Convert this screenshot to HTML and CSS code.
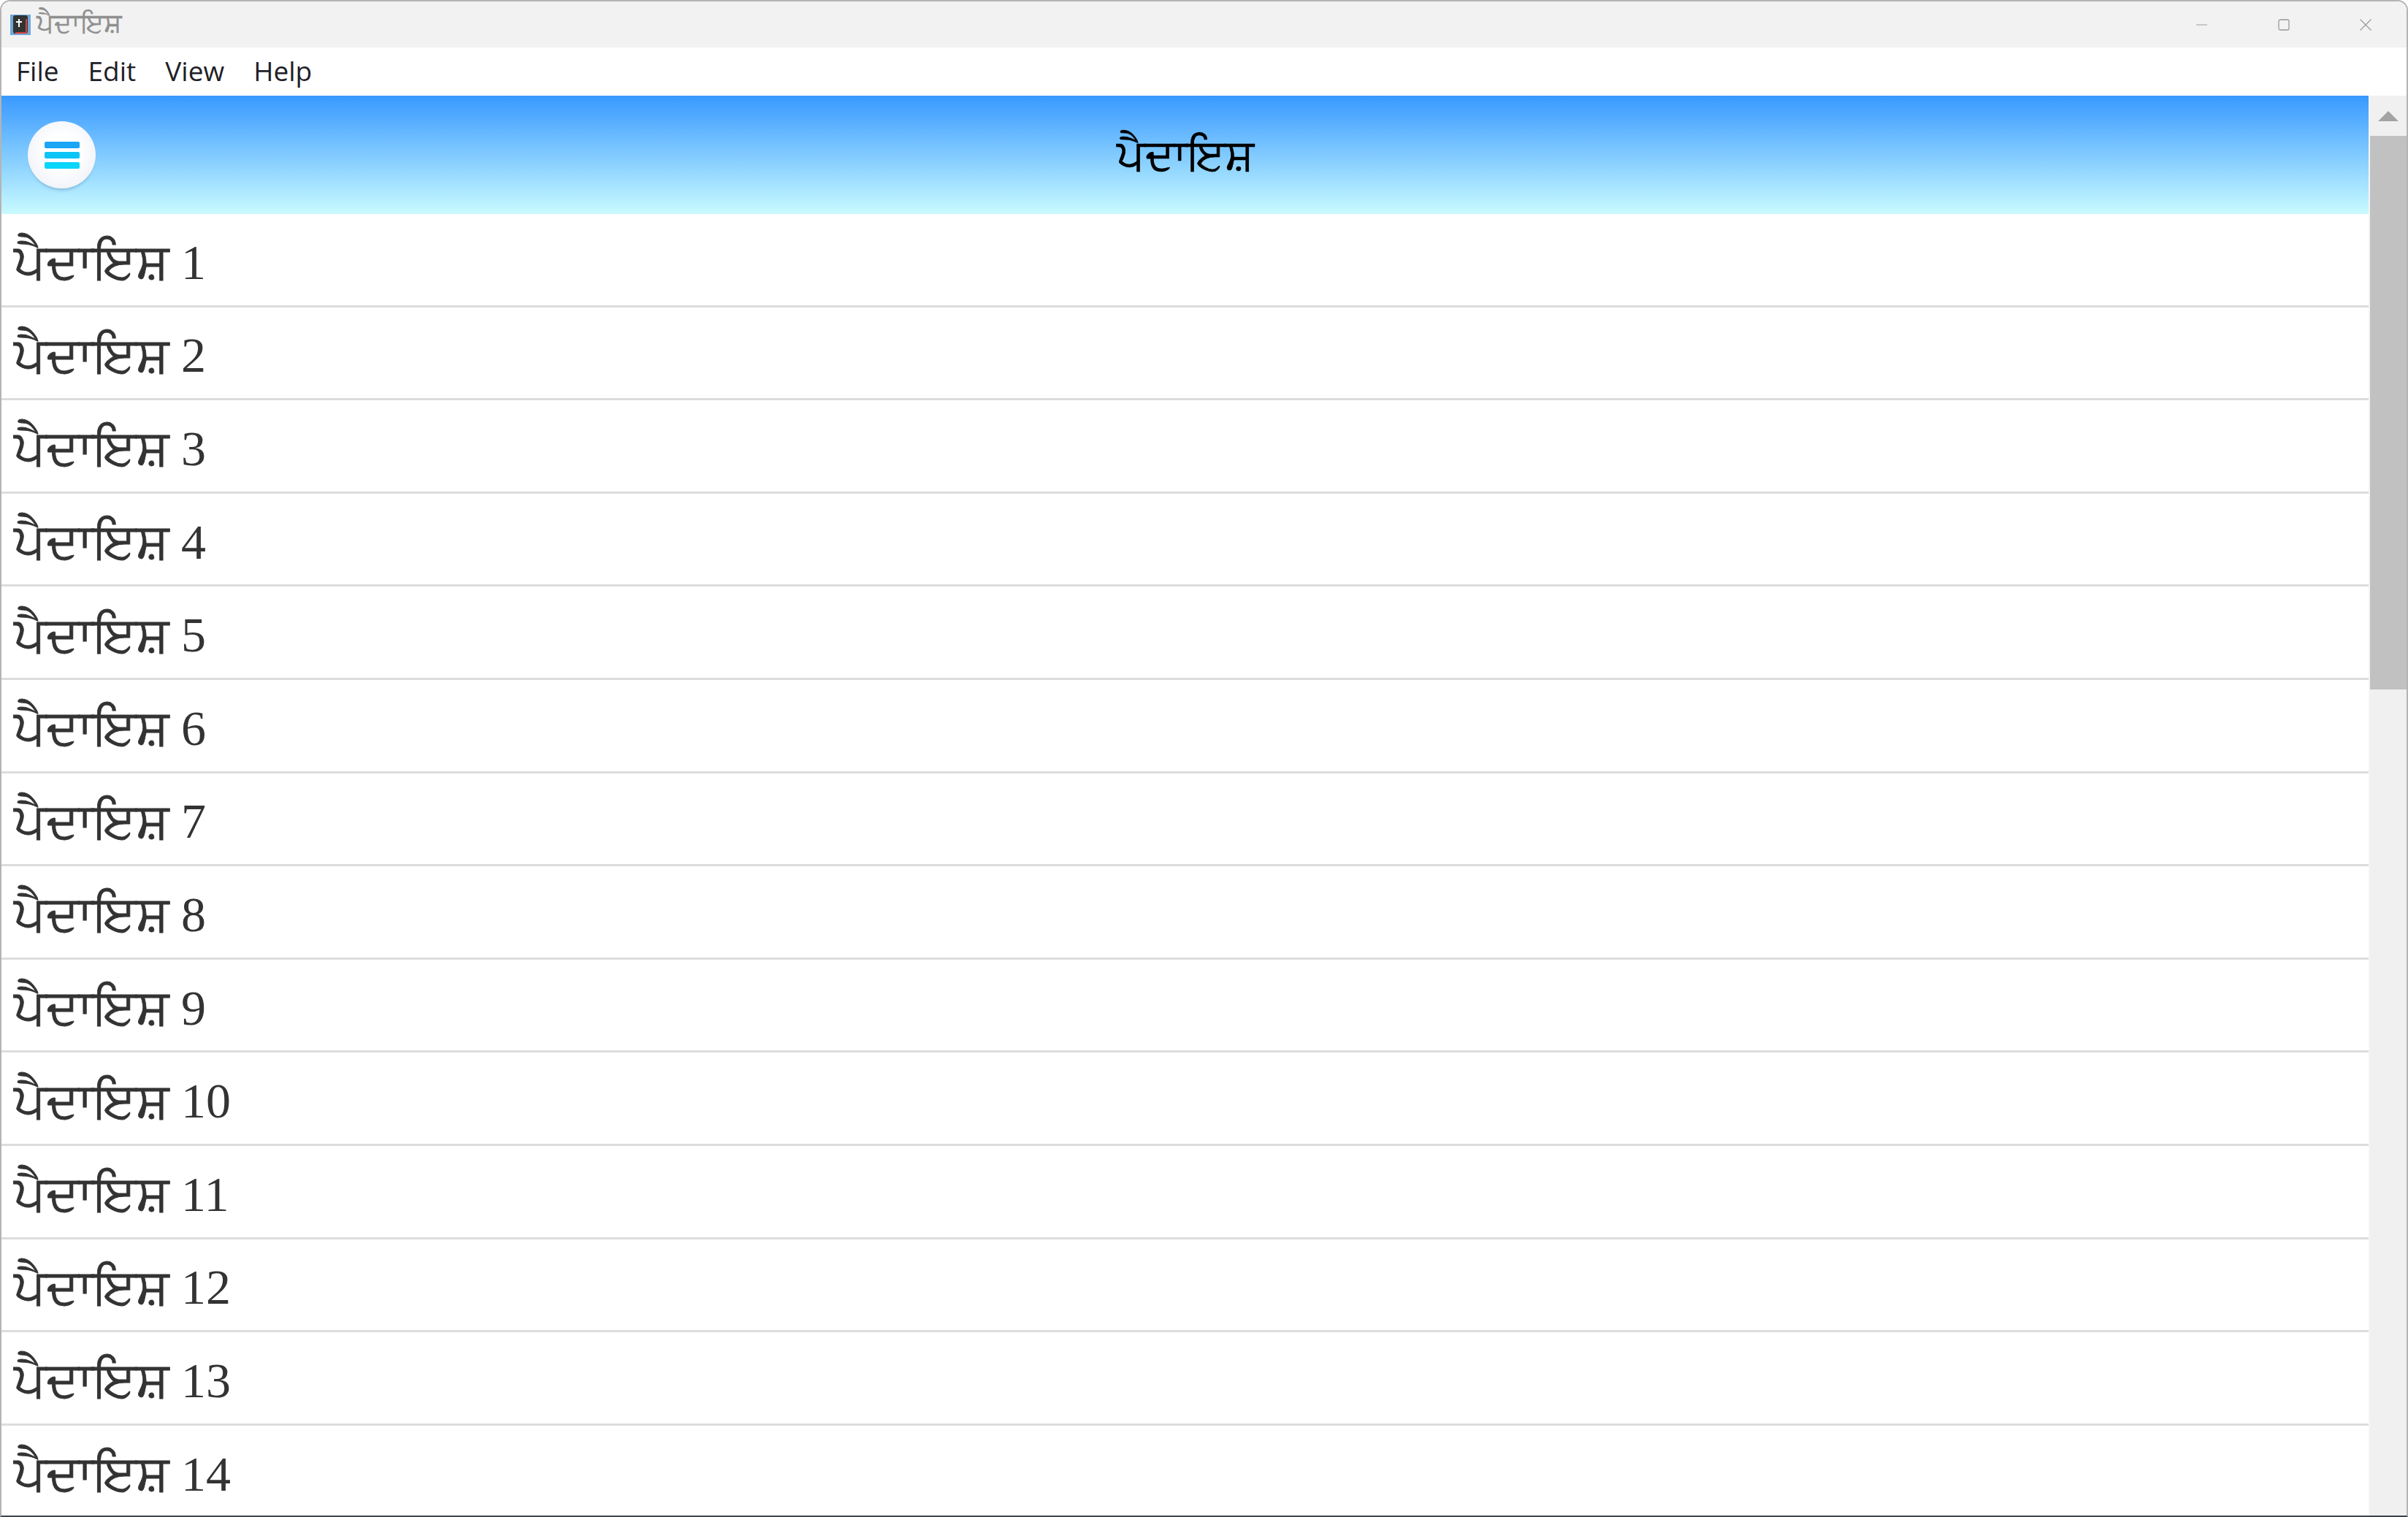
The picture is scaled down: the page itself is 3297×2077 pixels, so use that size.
FILE: index.html
```html
<!DOCTYPE html>
<html lang="pa">
<head>
<meta charset="utf-8">
<title>ਪੈਦਾਇਸ਼</title>
<link rel="stylesheet" href="styles.css">
</head>
<body>
<div class="window">
  <div class="titlebar">
    <svg class="app-icon" width="28" height="28" viewBox="0 0 28 28">
      <rect width="28" height="28" fill="#6fa8dc"/>
      <rect x="4" y="1" width="20" height="25" rx="3" fill="#333"/>
      <path d="M22 6v19H7" fill="none" stroke="#d9403a" stroke-width="2"/>
      <path d="M12 6v11M8 10h8" stroke="#fff" stroke-width="2"/>
    </svg>
    <span class="title-text">ਪੈਦਾਇਸ਼</span>
    <div class="controls">
      <svg width="16" height="16" viewBox="0 0 16 16"><path d="M0 8h15" stroke="#999" stroke-width="1.200"/></svg>
      <svg width="16" height="16" viewBox="0 0 16 16"><rect x="1" y="1" width="14" height="14" rx="2" fill="none" stroke="#999" stroke-width="1.300"/></svg>
      <svg width="16" height="16" viewBox="0 0 16 16"><path d="M0.500 0.500l15 15M15.500 0.500l-15 15" stroke="#999" stroke-width="1.200"/></svg>
    </div>
  </div>
  <nav class="menubar">
    <span>File</span><span>Edit</span><span>View</span><span>Help</span>
  </nav>
  <div class="content">
    <main class="page">
      <header class="header">
        <button class="menu-btn" aria-label="Menu"><span class="bars"><i></i><i></i><i></i></span></button>
        <h1>ਪੈਦਾਇਸ਼</h1>
      </header>
      <ul class="list">
        <li><span class="name">ਪੈਦਾਇਸ਼</span> 1</li><li><span class="name">ਪੈਦਾਇਸ਼</span> 2</li>
        <li><span class="name">ਪੈਦਾਇਸ਼</span> 3</li><li><span class="name">ਪੈਦਾਇਸ਼</span> 4</li>
        <li><span class="name">ਪੈਦਾਇਸ਼</span> 5</li><li><span class="name">ਪੈਦਾਇਸ਼</span> 6</li>
        <li><span class="name">ਪੈਦਾਇਸ਼</span> 7</li><li><span class="name">ਪੈਦਾਇਸ਼</span> 8</li>
        <li><span class="name">ਪੈਦਾਇਸ਼</span> 9</li><li><span class="name">ਪੈਦਾਇਸ਼</span> 10</li>
        <li><span class="name">ਪੈਦਾਇਸ਼</span> 11</li><li><span class="name">ਪੈਦਾਇਸ਼</span> 12</li>
        <li><span class="name">ਪੈਦਾਇਸ਼</span> 13</li><li><span class="name">ਪੈਦਾਇਸ਼</span> 14</li>
      </ul>
    </main>
    <aside class="scrollbar">
      <div class="arrow-box"><span class="arrow"></span></div>
      <div class="thumb"></div>
    </aside>
  </div>
</div>
</body>
</html>
```
FILE: styles.css
```css
* { box-sizing: border-box; }
html, body { margin: 0; height: 100%; overflow: hidden; background: #fff; }
.window {
  width: 3297px; height: 2077px; display: flex; flex-direction: column;
  border: 2px solid #b4b4b4; border-bottom-color: #3c4650;
  border-radius: 14px 14px 0 0; overflow: hidden; background: #fff;
}
.titlebar {
  height: 63px; flex: none; background: #f2f2f2; display: flex; align-items: center;
  padding-left: 12px; gap: 8px;
}
.app-icon { flex: none; }
.title-text {
  font-family: "Liberation Serif", "Noto Sans", serif; font-size: 37px; color: #8f8f8f; line-height: 1;
  -webkit-text-stroke: 0.4px #8f8f8f; position: relative; top: -2px;
}
.controls {
  margin-left: auto; display: flex; gap: 96px; padding-right: 48px; align-items: center;
}
.controls svg { display: block; width: 16px; height: 16px; }
.menubar {
  height: 66px; flex: none; background: #fff; display: flex; align-items: center; padding: 0 0 4px 20px; gap: 40px;
  font-family: "Open Sans", "Noto Sans", sans-serif; font-size: 37px; color: #1f1f28;
}
.content { flex: 1; min-height: 0; display: flex; }
.page { flex: 1; min-width: 0; overflow: hidden; }
.header {
  height: 162px; position: relative; display: flex; align-items: center; justify-content: center;
  background: linear-gradient(#3899ff, #c9fbff);
}
.header h1 {
  margin: 0; font-family: "Liberation Serif", "Noto Sans", serif; font-weight: 400; font-size: 60px; color: #000;
  -webkit-text-stroke: 0.7px #000;
}
.menu-btn {
  position: absolute; left: 36px; top: 35px; width: 93px; height: 92px; padding: 0; border: 0; border-radius: 50%;
  background: radial-gradient(circle at 50% 45%, #fff 35%, #e9edf6 95%);
  box-shadow: 0 5px 4px -3px rgba(60,100,140,.4);
  display: flex; align-items: center; justify-content: center;
}
.bars { display: flex; flex-direction: column; gap: 5px; width: 48px; filter: blur(0.7px); }
.bars i { display: block; height: 9px; border-radius: 2px; background: #0cc4f5; }
.bars i:first-child { background: #1aa5f5; }
.bars i:last-child { background: #0ad5fa; }
.list { list-style: none; margin: 0; padding: 0; }
.list li {
  height: 127.600px; border-bottom: 3px solid #dcdcdc; padding: 8px 0 0 17px; display: flex; align-items: center; white-space: pre;
  font-family: "Liberation Serif", "Noto Sans", serif; font-size: 68px; color: #333;
}
.name { -webkit-text-stroke: 0.8px #333; }
.scrollbar { width: 52px; flex: none; background: #f0f0f0; display: flex; flex-direction: column; border-left: 2px solid #f5f5f5; }
.arrow-box { height: 55px; display: flex; align-items: center; justify-content: center; }
.arrow { width: 0; height: 0; border: solid transparent; border-width: 0 14px 14px; border-bottom-color: #a3a3a3; }
.thumb { height: 758px; background: #c1c1c1; }
```
